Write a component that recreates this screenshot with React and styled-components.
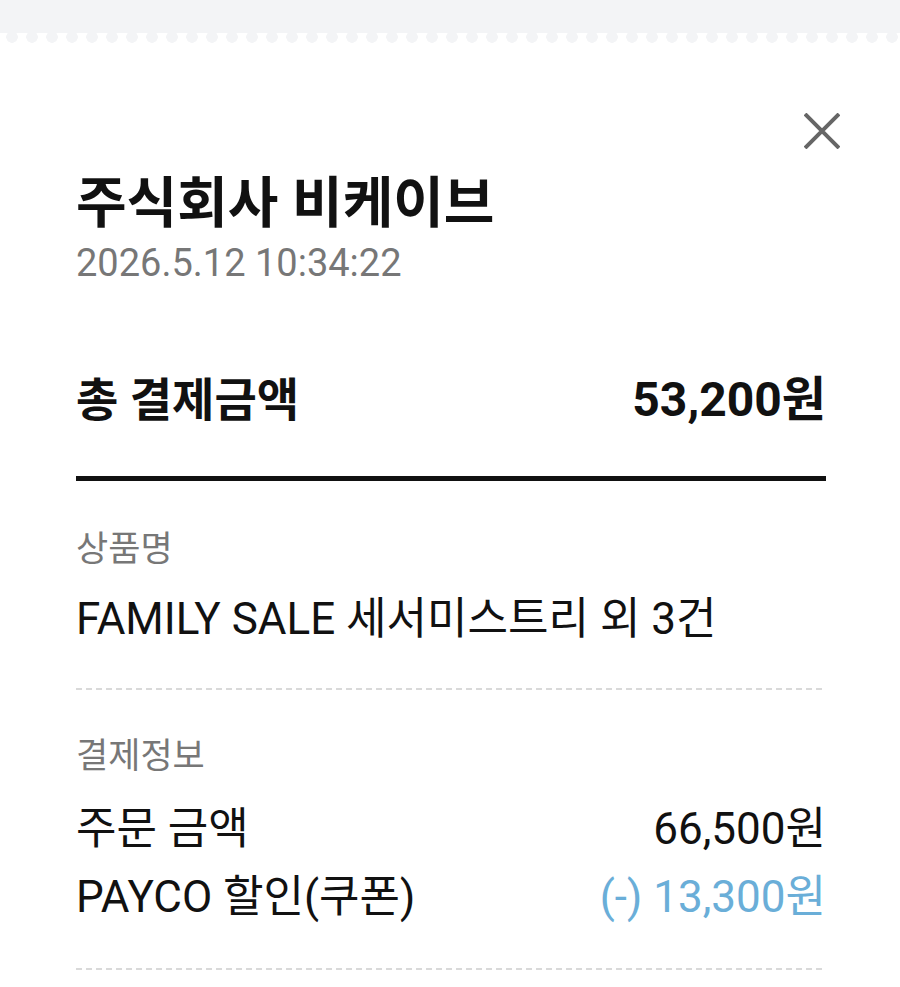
import React from "react";
import styled, { createGlobalStyle } from "styled-components";

const GlobalStyle = createGlobalStyle`
  html, body {
    margin: 0;
    padding: 0;
    background: #ffffff;
  }
  body {
    font-family: Roboto, "Noto Sans CJK KR", sans-serif;
    color: #111111;
  }
`;

const Page = styled.div`
  width: 900px;
  min-height: 987px;
  background: #ffffff;
  display: flex;
  flex-direction: column;
`;

const TopShade = styled.div`
  height: 33px;
  background: #f3f4f6;
`;

// scalloped edge of the receipt paper
const Scallops = styled.div`
  height: 10px;
  background-color: #ffffff;
  background-image: radial-gradient(circle 6px at 12px 4px, #f3f4f6 92%, transparent 100%);
  background-size: 20px 10px;
  background-repeat: repeat-x;
`;

const Paper = styled.div`
  padding: 0 74px 0 76px;
  display: flex;
  flex-direction: column;
`;

const CloseRow = styled.div`
  display: flex;
  justify-content: flex-end;
  padding-top: 70px;
  margin-right: -14px;
`;

const CloseButton = styled.button`
  width: 36px;
  height: 36px;
  padding: 0;
  border: none;
  background: transparent;
  cursor: pointer;
  display: flex;
`;

const Title = styled.h1`
  margin: 24px 0 0;
  font-size: 55px;
  line-height: 60px;
  font-weight: 700;
  color: #111111;
`;

const DateText = styled.div`
  margin-top: 8px;
  font-size: 38px;
  line-height: 44px;
  color: #777777;
`;

const Row = styled.div`
  display: flex;
  justify-content: space-between;
  align-items: center;
  margin-top: ${(p) => p.$top || 0}px;
  font-size: ${(p) => (p.$big ? 46 : 44)}px;
  line-height: ${(p) => (p.$big ? 56 : 50)}px;
  font-weight: ${(p) => (p.$big ? 700 : 400)};
`;

const Amount = styled.span`
  font-size: ${(p) => (p.$big ? "48px" : "inherit")};
  color: ${(p) => (p.$discount ? "#6aaed8" : "inherit")};
`;

const ThickRule = styled.div`
  margin-top: 48px;
  height: 5px;
  background: #111111;
`;

const DashedRule = styled.div`
  margin-top: ${(p) => p.$top}px;
  height: 2px;
  background-image: repeating-linear-gradient(to right, #d9d9d9 0 6px, transparent 6px 10px);
`;

const Label = styled.div`
  margin-top: ${(p) => p.$top}px;
  font-size: 35px;
  line-height: 40px;
  color: #777777;
`;

const Value = styled.div`
  margin-top: 24px;
  font-size: 44px;
  line-height: 50px;
  color: #111111;
`;

const CloseIcon = () => (
  <svg width="36" height="36" viewBox="0 0 36 36">
    <path d="M1 1 L35 35 M35 1 L1 35" stroke="#666666" strokeWidth="4" fill="none" />
  </svg>
);

export default function App() {
  return (
    <Page>
      <GlobalStyle />
      <TopShade />
      <Scallops />
      <Paper>
        <CloseRow>
          <CloseButton aria-label="닫기">
            <CloseIcon />
          </CloseButton>
        </CloseRow>
        <Title>주식회사 비케이브</Title>
        <DateText>2026.5.12 10:34:22</DateText>

        <Row $big $top={87}>
          <span>총 결제금액</span>
          <Amount $big>53,200원</Amount>
        </Row>
        <ThickRule />

        <Label $top={49}>상품명</Label>
        <Value>FAMILY SALE 세서미스트리 외 3건</Value>
        <DashedRule $top={44} />

        <Label $top={47}>결제정보</Label>
        <Row $top={27}>
          <span>주문 금액</span>
          <Amount>66,500원</Amount>
        </Row>
        <Row $top={18}>
          <span>PAYCO 할인(쿠폰)</span>
          <Amount $discount>(-) 13,300원</Amount>
        </Row>
        <DashedRule $top={46} />
      </Paper>
    </Page>
  );
}
